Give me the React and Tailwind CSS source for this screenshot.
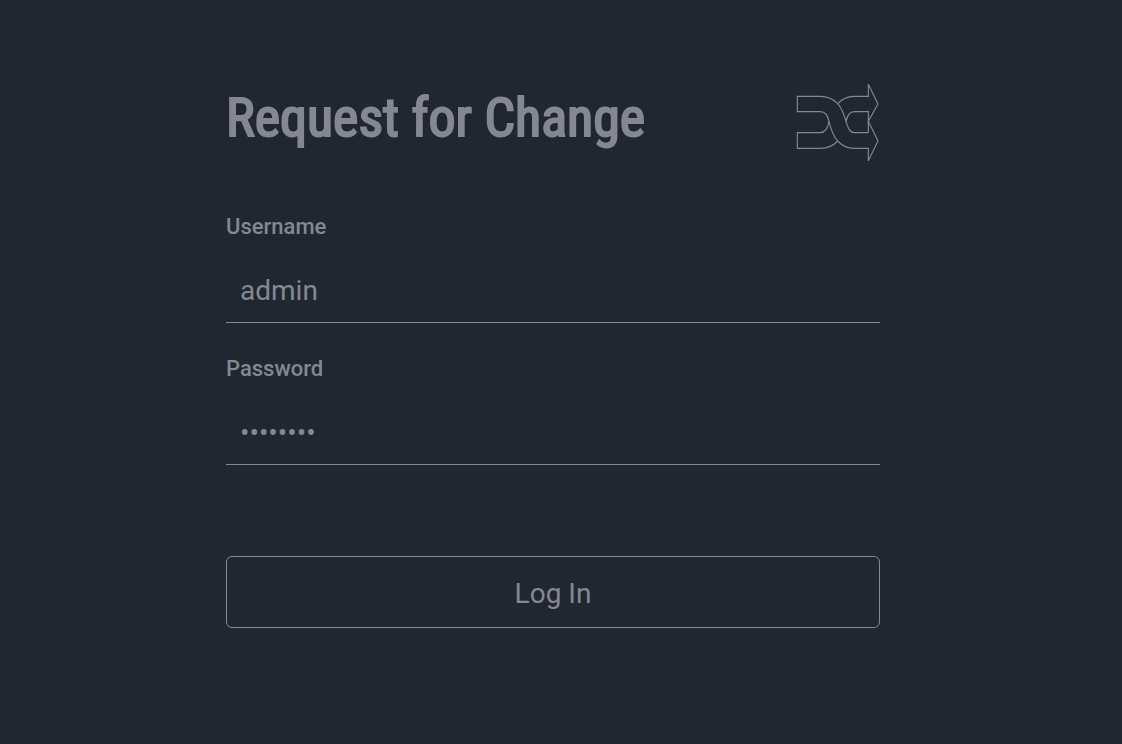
/**
 * Login page for the Request for Change app.
 */
import { useState } from 'react';

const ShuffleLogo = () => (
  <svg
    viewBox="30 18 252 240"
    className="h-20 w-21 shrink-0"
    fill="none"
    stroke="currentColor"
    strokeWidth="3.4"
    strokeLinejoin="miter"
    aria-hidden="true"
  >
    {/* left tails */}
    <path d="M155 83C142 69 125 61 103 61H34V107H103C118 107 125 117 129 136C125 159 118 170 103 170H34V217H103C125 217 142 209 155 195" />
    {/* crossing band */}
    <path d="M155 83C169 98 174 117 180 136C186 155 191 170 205 170H247" />
    <path d="M129 136C134 158 141 179 155 195C168 209 182 217 204 217H247V254L276 195L247 136" />
    {/* upper arrow */}
    <path d="M155 83C168 69 182 61 204 61H247V25L276 84L247 136V107H205C190 107 184 118 180 136" />
    <path d="M247 136V170" />
  </svg>
);

const Field = ({ id, label, type, value, onChange }) => (
  <div className="flex flex-col">
    <label htmlFor={id} className="text-[22px] leading-8 font-medium">
      {label}
    </label>
    <input
      id={id}
      type={type}
      value={value}
      onChange={(e) => onChange(e.target.value)}
      className="mt-4 h-16 w-full border-b border-[#858995] bg-transparent px-3.5 text-[28px] outline-none"
    />
  </div>
);

const App = () => {
  const [username, setUsername] = useState('admin');
  const [password, setPassword] = useState('password');

  return (
    <div className="min-h-screen bg-[#202731] px-4 pt-[82px] pb-8 font-['Roboto','Liberation_Sans',sans-serif] text-[#858793]">
      <div className="pr-4">
        <form className="mx-auto max-w-[654px]" onSubmit={(e) => e.preventDefault()}>
          <div className="flex items-start justify-between">
            <h1 className="font-['Roboto_Condensed','Liberation_Sans_Narrow',sans-serif] text-[54px] leading-18 font-normal [-webkit-text-stroke:2px]">
              Request for Change
            </h1>
            <ShuffleLogo />
          </div>

          <div className="mt-[49px] flex flex-col gap-[30px]">
            <Field id="username" label="Username" type="text" value={username} onChange={setUsername} />
            <Field id="password" label="Password" type="password" value={password} onChange={setPassword} />
          </div>

          <button
            type="submit"
            className="mt-[91px] h-18 w-full rounded-md border border-[#858995] pt-1 text-[28px]"
          >
            Log In
          </button>
        </form>
      </div>
    </div>
  );
};

export default App;
